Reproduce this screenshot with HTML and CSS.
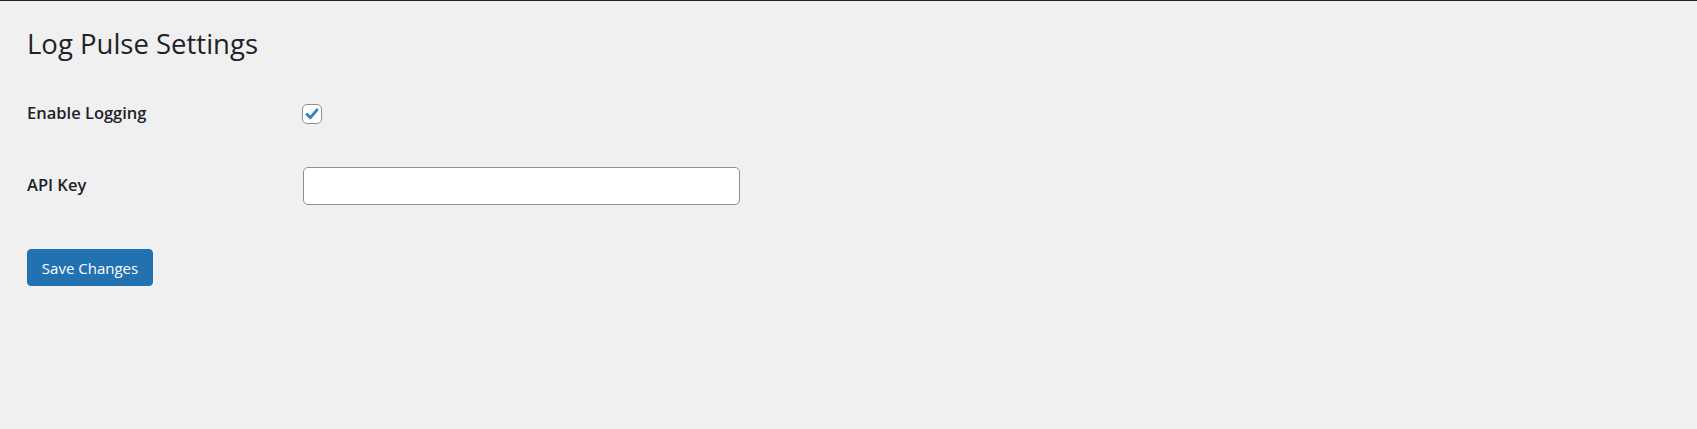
FILE: index.html
```html
<!DOCTYPE html>
<html lang="en">
<head>
<meta charset="utf-8">
<title>Log Pulse Settings</title>
<link rel="stylesheet" href="styles.css">
</head>
<body>
<div class="wrap">
  <h1 class="page-title">Log Pulse Settings</h1>
  <form class="settings-form">
    <div class="form-row row-check">
      <div class="field-label">Enable Logging</div>
      <div class="field-control">
        <span class="checkbox">
          <svg viewBox="0 0 20 20" width="20" height="20" aria-hidden="true">
            <path d="M4.4 10.3 L8.1 14.1 L15.6 5.4" fill="none" stroke="#3582c4" stroke-width="3.2" stroke-linecap="round" stroke-linejoin="round"/>
          </svg>
        </span>
      </div>
    </div>
    <div class="form-row row-text">
      <div class="field-label">API Key</div>
      <div class="field-control">
        <input class="text-input" type="text" value="">
      </div>
    </div>
    <div class="submit-row">
      <button type="button" class="button-primary">Save Changes</button>
    </div>
  </form>
</div>
</body>
</html>
```

FILE: styles.css
```css
html, body {
  margin: 0;
  padding: 0;
}
body {
  background: #f0f0f1;
  border-top: 1px solid #1d2327;
  color: #1d2327;
  font-family: "Open Sans", "Noto Sans", "Liberation Sans", sans-serif;
  min-height: 428px;
}
.wrap {
  padding: 0 27px;
}
.page-title {
  margin: 0;
  padding-top: 25px;
  font-size: 27.5px;
  line-height: 36px;
  font-weight: 400;
  color: #1d2327;
}
.settings-form {
  display: flex;
  flex-direction: column;
  margin-top: 22px;
}
.form-row {
  display: grid;
  grid-template-columns: 275px 1fr;
  align-items: center;
  height: 60px;
}
.row-text {
  margin-top: 12px;
}
.field-label {
  font-size: 16.5px;
  font-weight: 600;
  color: #1d2327;
  padding-bottom: 3px;
}
.row-check .field-label {
  padding-bottom: 4px;
}
.field-control {
  display: flex;
  align-items: center;
}
.checkbox {
  display: flex;
  width: 18px;
  height: 18px;
  border: 1px solid #8c8f94;
  border-radius: 5px;
  background: #fff;
  align-items: center;
  justify-content: center;
  box-sizing: content-box;
}
.checkbox svg {
  width: 18px;
  height: 18px;
}
.text-input {
  width: 437px;
  height: 38px;
  box-sizing: border-box;
  border: 1px solid #8c8f94;
  border-radius: 5px;
  background: #fff;
  margin: 0 0 0 1px;
  padding: 0 10px;
  font-family: inherit;
  font-size: 16px;
}
.submit-row {
  margin-top: 33px;
}
.button-primary {
  display: inline-flex;
  align-items: center;
  justify-content: center;
  width: 126px;
  height: 37px;
  padding: 0;
  border: 1px solid #2271b1;
  border-radius: 4px;
  background: #2271b1;
  color: #fff;
  font-family: inherit;
  font-size: 15px;
  cursor: pointer;
}
```
